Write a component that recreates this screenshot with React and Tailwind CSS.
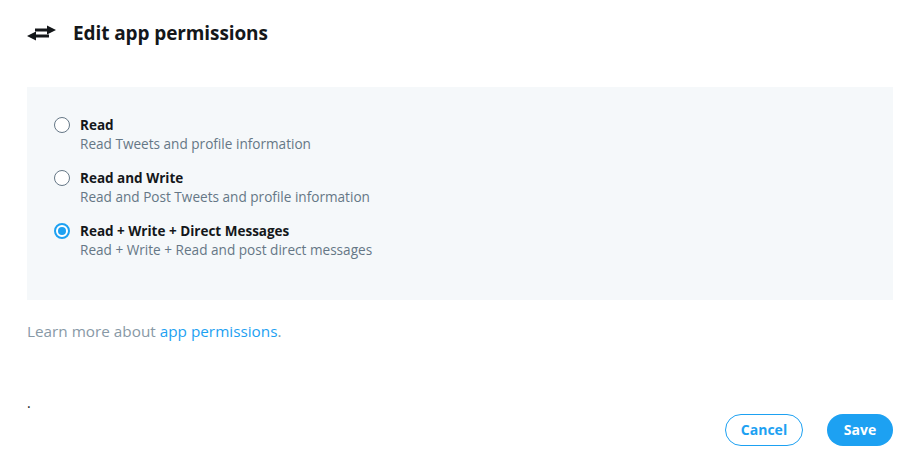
const options = [
  { id: "read", title: "Read", desc: "Read Tweets and profile information" },
  { id: "rw", title: "Read and Write", desc: "Read and Post Tweets and profile information" },
  { id: "rwdm", title: "Read + Write + Direct Messages", desc: "Read + Write + Read and post direct messages" },
];

function SwapIcon() {
  return (
    <svg width="30" height="16" viewBox="0 0 30 16" className="shrink-0">
      <path d="M8 5h14" stroke="#14171a" strokeWidth="3" />
      <path d="M20 0.5l9 4.5-9 4.5z" fill="#14171a" />
      <path d="M22 11H7" stroke="#14171a" strokeWidth="3" />
      <path d="M9 6.5L0 11l9 4.5z" fill="#14171a" />
    </svg>
  );
}

function Radio({ checked }) {
  if (checked) {
    return (
      <span className="mt-[1px] flex h-4 w-4 shrink-0 items-center justify-center rounded-full border-2 border-[#1da1f2] bg-white">
        <span className="h-2 w-2 rounded-full bg-[#1da1f2]" />
      </span>
    );
  }
  return <span className="mt-[1px] h-4 w-4 shrink-0 rounded-full border border-[#657786] bg-white" />;
}

export default function App() {
  const selected = "rwdm";

  return (
    <div className="h-[468px] w-[920px] bg-white px-[27px] pt-[19px] font-['Open_Sans',sans-serif] text-[#14171a]">
      <div className="flex items-center gap-[16px]">
        <SwapIcon />
        <h1 className="text-[19px] font-bold tracking-[-0.1px]">Edit app permissions</h1>
      </div>

      <div className="mt-[39px] flex h-[213px] flex-col gap-[15px] bg-[#f5f8fa] px-[27px] pt-[29px]">
        {options.map((o) => (
          <label key={o.id} className="flex gap-[10px]">
            <Radio checked={o.id === selected} />
            <div className="flex flex-col">
              <span className="text-[13.5px] font-bold leading-[18px]">{o.title}</span>
              <span className="text-[13.6px] leading-[20px] text-[#657786]">{o.desc}</span>
            </div>
          </label>
        ))}
      </div>

      <p className="mt-[20px] text-[15.3px] leading-[23px] text-[#8899a6]">
        Learn more about <a className="text-[#1da1f2]">app permissions</a>.
      </p>

      <div className="mt-[53px] text-sm leading-[14px]">.</div>

      <div className="mt-[4px] flex justify-end gap-[24px]">
        <button className="h-[32px] w-[78px] rounded-full border border-[#1da1f2] text-[14px] font-bold text-[#1da1f2]">
          Cancel
        </button>
        <button className="h-[32px] w-[66px] rounded-full bg-[#1da1f2] text-[14px] font-bold text-white">
          Save
        </button>
      </div>
    </div>
  );
}
